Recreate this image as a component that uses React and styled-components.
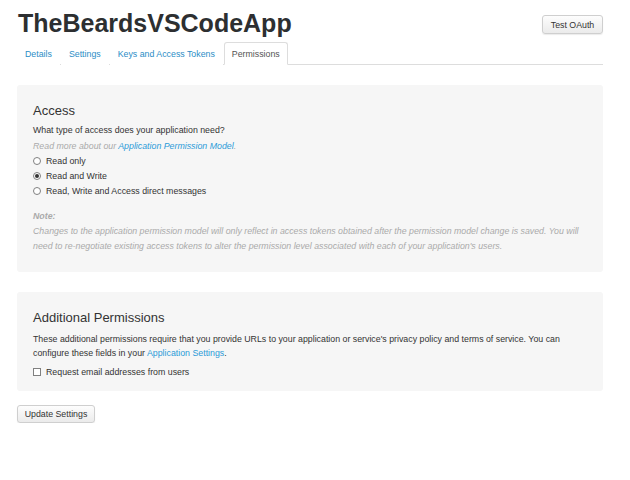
import React from "react";
import styled, { createGlobalStyle } from "styled-components";

const Global = createGlobalStyle`
  html, body { margin: 0; padding: 0; background: #fff; }
  body { font-family: "Liberation Sans", Arial, sans-serif; font-size: 8.8px; color: #333; }
  * { box-sizing: border-box; }
`;

const Page = styled.div`
  width: 586px;
  margin-left: 17px;
`;

const Header = styled.div`
  display: flex;
  justify-content: space-between;
  align-items: flex-start;
  height: 42px;
`;

const Title = styled.h1`
  margin: 8px 0 0 1px;
  font-family: "Liberation Sans", Arial, sans-serif;
  font-weight: 700;
  font-size: 25px;
  line-height: 30px;
  color: #2d2f31;
`;

const Button = styled.button`
  font-family: "Liberation Sans", Arial, sans-serif;
  font-size: 8.8px;
  color: #333;
  height: ${(p) => p.$h || 18}px;
  width: ${(p) => p.$w}px;
  padding: 0;
  margin-top: ${(p) => p.$mt || 0}px;
  border: 1px solid #cfcfcf;
  border-radius: 3px;
  background: linear-gradient(#fdfdfd, #ebebeb);
  box-shadow: 0 1px 1px rgba(0, 0, 0, 0.08);
  cursor: pointer;
`;

const Tabs = styled.ul`
  display: flex;
  list-style: none;
  margin: 0;
  padding: 0;
  border-bottom: 1px solid #ddd;
  height: 23px;
`;

const Tab = styled.li`
  height: 23px;
  padding: 0 7px;
  display: flex;
  align-items: center;
  margin-right: 1px;
  color: ${(p) => (p.$active ? "#555" : "#2b8dc6")};
  border: 1px solid ${(p) => (p.$active ? "#ddd" : "transparent")};
  border-bottom-color: ${(p) => (p.$active ? "#fff" : "transparent")};
  border-radius: 3px 3px 0 0;
  background: #fff;
  margin-bottom: -1px;
`;

const Panel = styled.section`
  background: #f6f6f6;
  border-radius: 3px;
  margin-top: 20px;
  padding: ${(p) => p.$pad};
`;

const Heading = styled.h2`
  margin: 0;
  font-weight: 400;
  font-size: 13px;
  line-height: 16px;
  color: #333;
`;

const Text = styled.p`
  margin: ${(p) => p.$m || 0};
  line-height: ${(p) => p.$lh || 15}px;
  color: ${(p) => (p.$muted ? "#aaa" : "#333")};
  font-style: ${(p) => (p.$italic ? "italic" : "normal")};
  font-weight: ${(p) => (p.$bold ? 700 : 400)};
`;

const Link = styled.a`
  color: #2b9bd8;
  text-decoration: none;
`;

const Options = styled.div`
  display: flex;
  flex-direction: column;
  margin: ${(p) => p.$m || 0};
`;

const Option = styled.label`
  display: flex;
  align-items: center;
  gap: 5px;
  height: 15px;
  color: #333;
`;

const Radio = styled.span`
  width: 8px;
  height: 8px;
  border: 1px solid #808080;
  border-radius: 50%;
  background: #fff;
  display: inline-flex;
  align-items: center;
  justify-content: center;
  &::after {
    content: "";
    width: 4px;
    height: 4px;
    border-radius: 50%;
    background: ${(p) => (p.$checked ? "#333" : "transparent")};
  }
`;

const Check = styled.span`
  width: 8px;
  height: 8px;
  border: 1px solid #808080;
  background: #fff;
`;

export default function App() {
  return (
    <>
      <Global />
      <Page>
        <Header>
          <Title>TheBeardsVSCodeApp</Title>
          <Button $mt={15} $h={19} $w={61}>Test OAuth</Button>
        </Header>
        <Tabs>
          <Tab>Details</Tab>
          <Tab>Settings</Tab>
          <Tab>Keys and Access Tokens</Tab>
          <Tab $active>Permissions</Tab>
        </Tabs>
        <Panel $pad="18px 12px 18px 16px">
          <Heading>Access</Heading>
          <Text $m="4px 0 1px">What type of access does your application need?</Text>
          <Text $muted $italic $lh={14}>
            Read more about our <Link href="#">Application Permission Model</Link>.
          </Text>
          <Options>
            <Option><Radio />Read only</Option>
            <Option><Radio $checked />Read and Write</Option>
            <Option><Radio />Read, Write and Access direct messages</Option>
          </Options>
          <Text $muted $italic $bold $m="11px 0 0">Note:</Text>
          <Text $muted $italic>
            Changes to the application permission model will only reflect in access tokens obtained after the permission model change is saved. You will need to re-negotiate existing access tokens to alter the permission level associated with each of your application's users.
          </Text>
        </Panel>
        <Panel $pad="18px 16px 12px">
          <Heading>Additional Permissions</Heading>
          <Text $m="6px 0 0" $lh={14}>
            These additional permissions require that you provide URLs to your application or service's privacy policy and terms of service. You can configure these fields in your <Link href="#">Application Settings</Link>.
          </Text>
          <Options $m="4px 0 0">
            <Option><Check />Request email addresses from users</Option>
          </Options>
        </Panel>
        <Button $mt={14} $w={78}>Update Settings</Button>
      </Page>
    </>
  );
}
